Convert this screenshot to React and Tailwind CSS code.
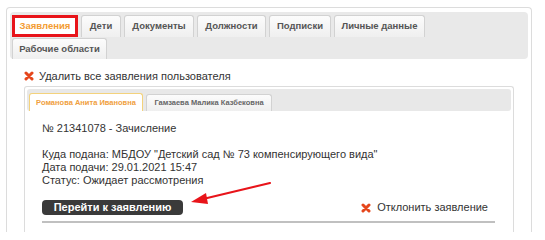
import React from "react";

const FONT = { fontFamily: "'Liberation Sans', Arial, sans-serif" };

const TOP_TABS = [
  { label: "Заявления", w: "w-[66px]", active: true },
  { label: "Дети", w: "w-[40px]" },
  { label: "Документы", w: "w-[70px]" },
  { label: "Должности", w: "w-[69px]" },
  { label: "Подписки", w: "w-[62px]" },
  { label: "Личные данные", w: "w-[91px]" },
];

function RedX({ className = "" }) {
  return (
    <svg viewBox="0 0 10 10" className={`w-[10px] h-[10px] ${className}`}>
      <path
        d="M2 2 L8 8 M8 2 L2 8"
        stroke="#e5461c"
        strokeWidth="3"
        strokeLinecap="round"
      />
    </svg>
  );
}

function Tab({ label, w, active }) {
  if (active) {
    return (
      <div
        className={`${w} h-full flex items-center justify-center whitespace-nowrap bg-white border-[3px] border-[#e8141a] text-[9.5px] font-bold text-[#f39c32]`}
      >
        {label}
      </div>
    );
  }
  return (
    <div
      className={`${w} h-full flex items-center justify-center whitespace-nowrap rounded-t-[3px] border border-b-0 border-[#d2d2d2] bg-gradient-to-b from-[#fcfcfc] to-[#efefef] text-[9.5px] font-bold text-[#555]`}
    >
      {label}
    </div>
  );
}

export default function App() {
  return (
    <div className="relative w-[545px] h-[240px] bg-white pt-[7px] pl-[6px]" style={FONT}>
      <div className="w-[526px] h-[225px] border border-b-0 border-[#dcdcdc] rounded-t-[4px] pt-[4px] px-[3px] flex flex-col overflow-hidden">
        {/* top tab bar */}
        <div className="bg-[#e9e9e9] rounded-[4px] pl-[2px] pt-[3px] flex flex-col gap-[1px]">
          <div className="h-[22px] flex gap-[3px]">
            {TOP_TABS.map((t) => (
              <Tab key={t.label} {...t} />
            ))}
          </div>
          <div className="h-[21px] flex">
            <Tab label="Рабочие области" w="w-[95px]" />
          </div>
        </div>

        <div className="flex-1 flex flex-col pl-[14px] pt-[10px]">
          <div className="h-[14px] flex items-center gap-[5px] text-[11px] text-[#333] whitespace-nowrap">
            <RedX />
            <span>Удалить все заявления пользователя</span>
          </div>

          {/* inner panel */}
          <div className="mt-[3px] w-[490px] flex-1 border border-b-0 border-[#dcdcdc] rounded-t-[3px] pt-[2px] px-[2px]">
            <div className="h-[22px] bg-[#e8e8e8] rounded-[3px] pl-[2px] flex items-end gap-[3px]">
              <div className="w-[114px] h-[18px] flex items-center justify-center whitespace-nowrap bg-white border border-b-0 border-[#f3d27c] rounded-t-[3px] text-[7.5px] font-bold text-[#f0a040]">
                Романова Анита Ивановна
              </div>
              <div className="w-[126px] h-[17px] flex items-center justify-center whitespace-nowrap bg-gradient-to-b from-[#fcfcfc] to-[#efefef] border border-b-0 border-[#d2d2d2] rounded-t-[3px] text-[7.5px] font-bold text-[#666]">
                Гамзаева Малика Казбековна
              </div>
            </div>

            <div className="pl-[15px] pt-[11px] text-[11px] leading-[13px] text-[#333] whitespace-nowrap">
              <div>№ 21341078 - Зачисление</div>
              <div className="mt-[13px]">
                <div>Куда подана: МБДОУ "Детский сад № 73 компенсирующего вида"</div>
                <div>Дата подачи: 29.01.2021 15:47</div>
                <div>Статус: Ожидает рассмотрения</div>
              </div>

              <div className="w-[453px] mt-[13px] flex items-center justify-between pr-[7px]">
                <div className="w-[141px] h-[15px] rounded-[4px] bg-[#3a3a3a] flex items-center justify-center text-[11px] font-bold text-white">
                  Перейти к заявлению
                </div>
                <div className="flex items-center gap-[6px]">
                  <RedX />
                  <span>Отклонить заявление</span>
                </div>
              </div>
              <div className="w-[453px] h-[2px] mt-[6px] bg-[#c0c0c0]" />
            </div>
          </div>
        </div>
      </div>

      {/* annotation arrow */}
      <svg className="absolute left-0 top-0 pointer-events-none" width="545" height="240">
        <line x1="270" y1="183" x2="203" y2="199" stroke="#e8141a" strokeWidth="2.2" strokeLinecap="round" />
        <polygon points="191,202 206,193 208,204" fill="#e8141a" />
      </svg>
    </div>
  );
}
